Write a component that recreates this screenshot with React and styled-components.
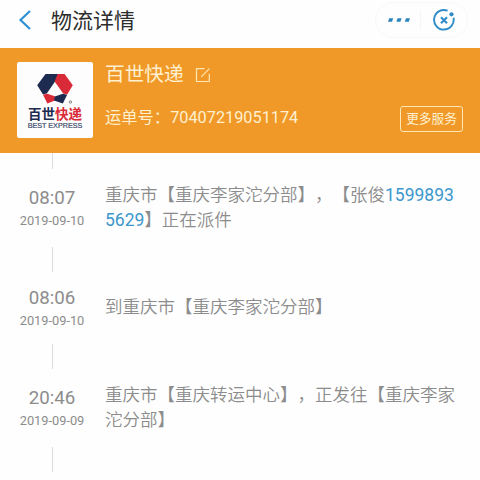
import React from "react";
import styled, { createGlobalStyle } from "styled-components";

const records = [
  {
    time: "08:07",
    date: "2019-09-10",
    parts: [
      { text: "重庆市【重庆李家沱分部】，【张俊" },
      { text: "15998935629", phone: true },
      { text: "】正在派件" },
    ],
  },
  {
    time: "08:06",
    date: "2019-09-10",
    parts: [{ text: "到重庆市【重庆李家沱分部】" }],
  },
  {
    time: "20:46",
    date: "2019-09-09",
    parts: [{ text: "重庆市【重庆转运中心】，正发往【重庆李家沱分部】" }],
  },
];

const BackIcon = () => (
  <svg width='14' height='20' viewBox='0 0 14 20' fill='none'>
    <path d='M12 1 L2.5 10 L12 19' stroke='#2f8fd6' strokeWidth='2.2' />
  </svg>
);

const MoreIcon = () => (
  <svg width='24' height='6' viewBox='0 0 24 6' fill='#2b84bd'>
    <path d='M2.2 1.2 H6.2 L5 4.8 H1 Z' />
    <path d='M10.6 1.2 H14.6 L13.4 4.8 H9.4 Z' />
    <path d='M19 1.2 H23 L21.8 4.8 H17.8 Z' />
  </svg>
);

const CloseIcon = () => (
  <svg width='24' height='24' viewBox='0 0 24 24' fill='none'>
    <path
      d='M15.6 2.7 A9.8 9.8 0 1 0 21.5 9.8'
      stroke='#2f8cc8'
      strokeWidth='1.9'
    />
    <circle cx='19.5' cy='6.3' r='2.1' fill='#2f8cc8' />
    <path d='M9 9.2 L15 15.2 M15 9.2 L9 15.2' stroke='#2f8cc8' strokeWidth='2.1' />
  </svg>
);

const EditIcon = () => (
  <svg width='16' height='16' viewBox='0 0 16 16' fill='none'>
    <path
      d='M9.5 1.6 H1.5 V14.5 H14.3 V6.8 M6.2 9.8 L14.4 1.6'
      stroke='#ffe7b4'
      strokeWidth='1.2'
    />
  </svg>
);

const BestMark = () => (
  <svg width='38' height='32' viewBox='0 0 38 32'>
    <path d='M9.5 1 H24.5 L19.2 8.2 L10.8 20.4 L7 21.4 L1.2 12.2 Z' fill='#1d2b50' />
    <path d='M21.6 1 H28.6 L36.8 12.3 L31.2 21.4 L27.2 20.4 L18.6 8.4 Z' fill='#d92a38' />
    <path d='M7 21.8 L11.4 20.8 L19.4 23.6 L18.8 27.4 L11.4 30.6 Z' fill='#d92a38' />
    <path d='M31.2 21.8 L26.8 20.8 L18.8 23.6 L18 27.4 L26.8 30.6 Z' fill='#1d2b50' />
    <circle cx='34.4' cy='29' r='1.2' fill='none' stroke='#555' strokeWidth='0.7' />
  </svg>
);

const App = () => {
  return (
    <>
      <GlobalStyle />
      <Page>
        <TitleBar>
          <BackIcon />
          <Title>物流详情</Title>
          <Capsule>
            <MoreIcon />
            <Divider />
            <CloseIcon />
          </Capsule>
        </TitleBar>
        <Courier>
          <Logo>
            <BestMark />
            <LogoName>
              百世<span>快递</span>
            </LogoName>
            <LogoLatin>BEST EXPRESS</LogoLatin>
          </Logo>
          <CourierInfo>
            <CourierName>
              百世快递
              <EditIcon />
            </CourierName>
            <Waybill>运单号：70407219051174</Waybill>
          </CourierInfo>
          <ServiceButton>更多服务</ServiceButton>
        </Courier>
        <Connector $height={16} />
        {records.map((item) => (
          <React.Fragment key={item.time}>
            <Record>
              <When>
                <Time>{item.time}</Time>
                <Day>{item.date}</Day>
              </When>
              <Detail>
                {item.parts.map((part) =>
                  part.phone ? (
                    <Phone key={part.text}>{part.text}</Phone>
                  ) : (
                    part.text
                  )
                )}
              </Detail>
            </Record>
            <Connector $height={25} />
          </React.Fragment>
        ))}
      </Page>
    </>
  );
};

const GlobalStyle = createGlobalStyle`
  * {
    box-sizing: border-box;
  }
  body {
    margin: 0;
    background: #fefefe;
    font-family: Roboto, "Noto Sans CJK SC", sans-serif;
    text-spacing-trim: space-all;
  }
  svg {
    display: block;
    flex-shrink: 0;
  }
`;

const Page = styled.div`
  height: 480px;
  overflow: hidden;
  background: #fefefe;
`;

const TitleBar = styled.div`
  height: 48px;
  padding: 0 12px 8px 18px;
  display: flex;
  align-items: center;
`;

const Title = styled.div`
  margin-left: 19px;
  padding-top: 1px;
  font-size: 21px;
  line-height: 30px;
  color: #2c2c2c;
`;

const Capsule = styled.div`
  margin-left: auto;
  width: 93px;
  height: 36px;
  border: 1px solid #f8f8f8;
  border-radius: 18px;
  display: flex;
  align-items: center;
  padding-left: 11px;
`;

const Divider = styled.div`
  width: 1px;
  height: 20px;
  margin: 0 11px 0 9px;
  background: #f5f5f5;
`;

const Courier = styled.div`
  height: 105px;
  padding: 14px 17px;
  display: flex;
  background: #f09928;
  color: #fff0cf;
`;

const Logo = styled.div`
  width: 76px;
  height: 76px;
  padding-top: 11px;
  display: flex;
  flex-direction: column;
  align-items: center;
  border-radius: 2px;
  background: #fdfdfd;
  white-space: nowrap;
`;

const LogoName = styled.div`
  margin-top: 2px;
  font-size: 13.5px;
  font-weight: 700;
  line-height: 15px;
  color: #1d2b50;
  span {
    color: #d92a38;
  }
`;

const LogoLatin = styled.div`
  font-family: "Liberation Sans", sans-serif;
  font-size: 7.2px;
  line-height: 8px;
  -webkit-text-stroke: 0.2px #3c4a6c;
  color: #3c4a6c;
`;

const CourierInfo = styled.div`
  margin-left: 12px;
  padding-top: 1px;
`;

const CourierName = styled.div`
  display: flex;
  align-items: center;
  gap: 11px;
  font-size: 19.7px;
  line-height: 24px;
`;

const Waybill = styled.div`
  margin-top: 19px;
  font-size: 16.3px;
  line-height: 24px;
`;

const ServiceButton = styled.div`
  margin: 44px 0 0 auto;
  width: 63px;
  height: 26px;
  border: 1.5px solid #ffe7b4;
  border-radius: 3px;
  font-size: 12.7px;
  line-height: 23px;
  text-align: center;
`;

const Connector = styled.div`
  width: 1px;
  height: ${({ $height }) => $height}px;
  margin-left: 52px;
  background: #dcdcdc;
`;

const Record = styled.div`
  min-height: 71px;
  padding: 13.5px 0;
  display: flex;
  align-items: center;
  color: #8c8c8c;
`;

const When = styled.div`
  width: 105px;
  padding-right: 1px;
  text-align: center;
`;

const Time = styled.div`
  font-size: 18.7px;
  line-height: 24px;
`;

const Day = styled.div`
  font-size: 12.8px;
  line-height: 21px;
`;

const Detail = styled.div`
  width: 352px;
  font-size: 17.5px;
  font-weight: 350;
  line-height: 25.5px;
  word-break: break-all;
`;

const Phone = styled.span`
  font-weight: 400;
  color: #3c97cd;
`;

export default App;
